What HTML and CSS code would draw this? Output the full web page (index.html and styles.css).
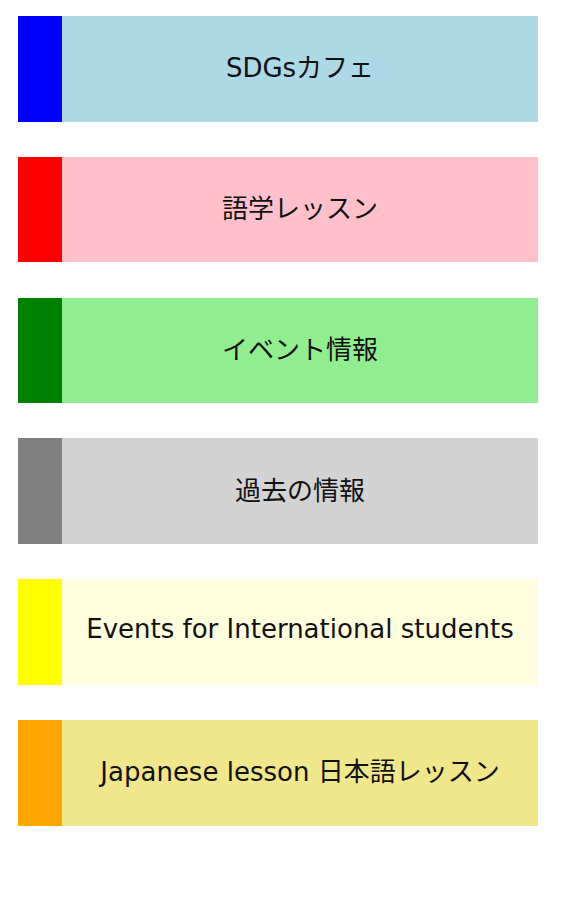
FILE: index.html
```html
<!DOCTYPE html>
<html lang="ja">
<head>
<meta charset="utf-8">
<link rel="stylesheet" href="styles.css">
</head>
<body>
<ul class="menu">
  <li class="item blue"><span class="bar"></span><span class="label">SDGsカフェ</span></li>
  <li class="item red"><span class="bar"></span><span class="label">語学レッスン</span></li>
  <li class="item green"><span class="bar"></span><span class="label">イベント情報</span></li>
  <li class="item gray"><span class="bar"></span><span class="label">過去の情報</span></li>
  <li class="item yellow"><span class="bar"></span><span class="label">Events for International students</span></li>
  <li class="item orange"><span class="bar"></span><span class="label">Japanese lesson 日本語レッスン</span></li>
</ul>
</body>
</html>
```
FILE: styles.css
```css
html, body { margin: 0; padding: 0; background: #fff; }
.menu {
  list-style: none;
  margin: 0;
  padding: 16px 0 0 18px;
  display: flex;
  flex-direction: column;
  gap: 35.2px;
}
.item {
  width: 520px;
  height: 105.6px;
  display: flex;
}
.bar { width: 44px; flex: none; }
.label {
  flex: 1;
  display: flex;
  align-items: center;
  justify-content: center;
  font-family: "DejaVu Sans", "Noto Sans CJK JP", sans-serif;
  font-size: 26px;
  color: #111;
  padding-bottom: 6px;
}
.blue .bar { background: blue; } .blue .label { background: lightblue; }
.red .bar { background: red; } .red .label { background: pink; }
.green .bar { background: green; } .green .label { background: lightgreen; }
.gray .bar { background: gray; } .gray .label { background: lightgray; }
.yellow .bar { background: yellow; } .yellow .label { background: lightyellow; }
.orange .bar { background: orange; } .orange .label { background: khaki; }
```
